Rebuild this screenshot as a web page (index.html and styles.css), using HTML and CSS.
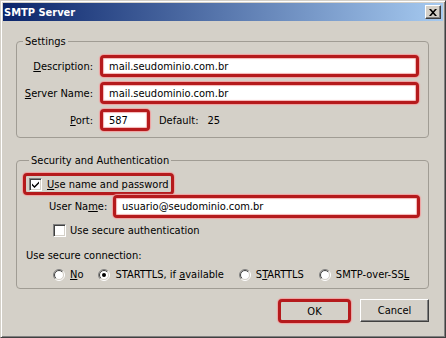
FILE: index.html
```html
<!DOCTYPE html>
<html lang="pt">
<head>
  <meta charset="UTF-8">
  <meta name="viewport" content="width=device-width, initial-scale=1">
  <title>SMTP Server</title>
  <link rel="stylesheet" href="styles.css">
</head>
<body>
  <svg class="defs" width="0" height="0">
    <defs>
      <linearGradient id="ringOuter" x1="0" y1="0" x2="1" y2="1">
        <stop offset="0.45" stop-color="#808080"/>
        <stop offset="0.55" stop-color="#ffffff"/>
      </linearGradient>
      <linearGradient id="ringInner" x1="0" y1="0" x2="1" y2="1">
        <stop offset="0.45" stop-color="#404040"/>
        <stop offset="0.55" stop-color="#d4d0c8"/>
      </linearGradient>
    </defs>
  </svg>

  <div class="window">
    <div class="titlebar">
      <span class="title">SMTP Server</span>
      <span class="close">
        <svg width="8" height="7" viewBox="0 0 8 7">
          <path d="M0 0h2l2 2.2L6 0h2L5 3.5 8 7H6L4 4.8 2 7H0l3-3.5z" fill="#000"/>
        </svg>
      </span>
    </div>

    <div class="content">
      <fieldset class="group settings">
        <legend>Settings</legend>
        <div class="form">
          <span class="lbl"><u>D</u>escription:</span>
          <div class="field mark">mail.seudominio.com.br</div>

          <span class="lbl"><u>S</u>erver Name:</span>
          <div class="field mark">mail.seudominio.com.br</div>

          <span class="lbl"><u>P</u>ort:</span>
          <div class="port-row">
            <div class="field mark port">587</div>
            <span class="default">Default:</span>
            <span class="default-val">25</span>
          </div>
        </div>
      </fieldset>

      <fieldset class="group security">
        <legend>Security and Authentication</legend>

        <div class="opt mark-box">
          <span class="check on">
            <svg width="7" height="7" viewBox="0 0 7 7">
              <path d="M0 2.5l2.5 2.5L7 0.5v2L2.5 7 0 4.5z" fill="#000"/>
            </svg>
          </span>
          <span><u>U</u>se name and password</span>
        </div>

        <div class="user-row">
          <span class="user-lbl">User Na<u>m</u>e:</span>
          <div class="field mark user">usuario@seudominio.com.br</div>
        </div>

        <div class="opt secure">
          <span class="check"></span>
          <span>Use secure authentication</span>
        </div>

        <div class="conn-lbl">Use secure connection:</div>

        <div class="radios">
          <div class="radio-opt">
            <svg class="radio" width="12" height="12" viewBox="0 0 12 12">
              <circle cx="6" cy="6" r="5.5" fill="none" stroke="url(#ringOuter)"/>
              <circle cx="6" cy="6" r="4.5" fill="#fff" stroke="url(#ringInner)"/>
            </svg>
            <span><u>N</u>o</span>
          </div>
          <div class="radio-opt">
            <svg class="radio" width="12" height="12" viewBox="0 0 12 12">
              <circle cx="6" cy="6" r="5.5" fill="none" stroke="url(#ringOuter)"/>
              <circle cx="6" cy="6" r="4.5" fill="#fff" stroke="url(#ringInner)"/>
              <circle cx="6" cy="6" r="2" fill="#000"/>
            </svg>
            <span>STARTTLS, if <u>a</u>vailable</span>
          </div>
          <div class="radio-opt">
            <svg class="radio" width="12" height="12" viewBox="0 0 12 12">
              <circle cx="6" cy="6" r="5.5" fill="none" stroke="url(#ringOuter)"/>
              <circle cx="6" cy="6" r="4.5" fill="#fff" stroke="url(#ringInner)"/>
            </svg>
            <span>S<u>T</u>ARTTLS</span>
          </div>
          <div class="radio-opt">
            <svg class="radio" width="12" height="12" viewBox="0 0 12 12">
              <circle cx="6" cy="6" r="5.5" fill="none" stroke="url(#ringOuter)"/>
              <circle cx="6" cy="6" r="4.5" fill="#fff" stroke="url(#ringInner)"/>
            </svg>
            <span>SMTP-over-SS<u>L</u></span>
          </div>
        </div>
      </fieldset>

      <div class="buttons">
        <div class="btn ok">OK</div>
        <div class="btn">Cancel</div>
      </div>
    </div>
  </div>
</body>
</html>
```

FILE: styles.css
```css
body {
  margin: 0;
  background: #d4d0c8;
  font-family: "DejaVu Sans Condensed", "Liberation Sans", sans-serif;
  font-size: 11px;
  color: #000;
}
.defs {
  position: absolute;
}
.window {
  width: 446px;
  height: 338px;
  box-sizing: border-box;
  border: 1px solid;
  border-color: #d4d0c8 #404040 #404040 #d4d0c8;
  padding: 2px;
  box-shadow: inset 1px 1px #fff, inset -1px -1px #808080;
}
.titlebar {
  height: 18px;
  display: flex;
  align-items: center;
  justify-content: space-between;
  padding: 0 2px 0 1px;
  background: linear-gradient(to right, #0a246a, #a6caf0);
}
.title {
  color: #fff;
  font-weight: bold;
  font-size: 11px;
}
.close {
  width: 16px;
  height: 14px;
  box-sizing: border-box;
  display: flex;
  align-items: center;
  justify-content: center;
  background: #d4d0c8;
  border: 1px solid;
  border-color: #fff #404040 #404040 #fff;
  box-shadow: inset -1px -1px #808080;
}
.content {
  padding: 14px 14px 0 13px;
}
.group {
  margin: 0;
  border: 1px solid #a09c94;
  border-radius: 4px;
  min-width: 0;
}
.group legend {
  margin-left: 6px;
  padding: 0 2px;
  line-height: 13px;
}
.settings {
  padding: 7px 9px 6px 0;
}
.form {
  display: grid;
  grid-template-columns: 76px 1fr;
  column-gap: 7px;
  row-gap: 5px;
  align-items: center;
}
.lbl {
  justify-self: end;
}
.field {
  height: 22px;
  box-sizing: border-box;
  background: #fff;
  display: flex;
  align-items: center;
  padding-left: 6px;
}
.mark {
  border: 3px solid #b51a1c;
  border-radius: 4px;
  box-shadow: 0 0 1px 1px #f0a0a0, inset 0 0 1px 1px #f4b4b4;
}
.port-row {
  display: flex;
  align-items: center;
}
.port {
  width: 50px;
}
.default {
  margin-left: 9px;
}
.default-val {
  margin-left: 9px;
}
.security {
  margin-top: 16px;
  padding: 6px 8px 7px 6px;
}
.opt {
  display: flex;
  align-items: center;
  gap: 5px;
}
.mark-box {
  display: inline-flex;
  height: 22px;
  box-sizing: border-box;
  padding: 0 2px 0 3px;
  border: 3px solid #b51a1c;
  border-radius: 4px;
  box-shadow: 0 0 1px 1px #f0a0a0;
}
.check {
  width: 13px;
  height: 13px;
  box-sizing: border-box;
  background: #fff;
  border: 1px solid;
  border-color: #808080 #fff #fff #808080;
  box-shadow: inset 1px 1px #404040, inset -1px -1px #d4d0c8;
  display: flex;
  align-items: center;
  justify-content: center;
}
.user-row {
  display: flex;
  align-items: center;
  padding-left: 26px;
}
.user-lbl {
  width: 64px;
}
.user {
  flex: 1;
  height: 23px;
}
.secure {
  margin-top: 6px;
  padding-left: 30px;
  gap: 4px;
}
.conn-lbl {
  margin-top: 12px;
  padding-left: 3px;
  line-height: 13px;
}
.radios {
  margin-top: 6px;
  padding-left: 30px;
  display: flex;
  gap: 15px;
}
.radio-opt {
  display: flex;
  align-items: center;
  gap: 5px;
}
.buttons {
  display: flex;
  justify-content: flex-end;
  gap: 9px;
  margin-top: 10px;
}
.btn {
  width: 69px;
  height: 23px;
  box-sizing: border-box;
  display: flex;
  align-items: center;
  justify-content: center;
  background: #d4d0c8;
  border: 1px solid;
  border-color: #fff #404040 #404040 #fff;
  box-shadow: inset -1px -1px #808080;
}
.ok {
  width: 73px;
  height: 24px;
  border: 3px solid #b51a1c;
  border-radius: 4px;
  box-shadow: 0 0 1px 1px #f0a0a0;
}
```
